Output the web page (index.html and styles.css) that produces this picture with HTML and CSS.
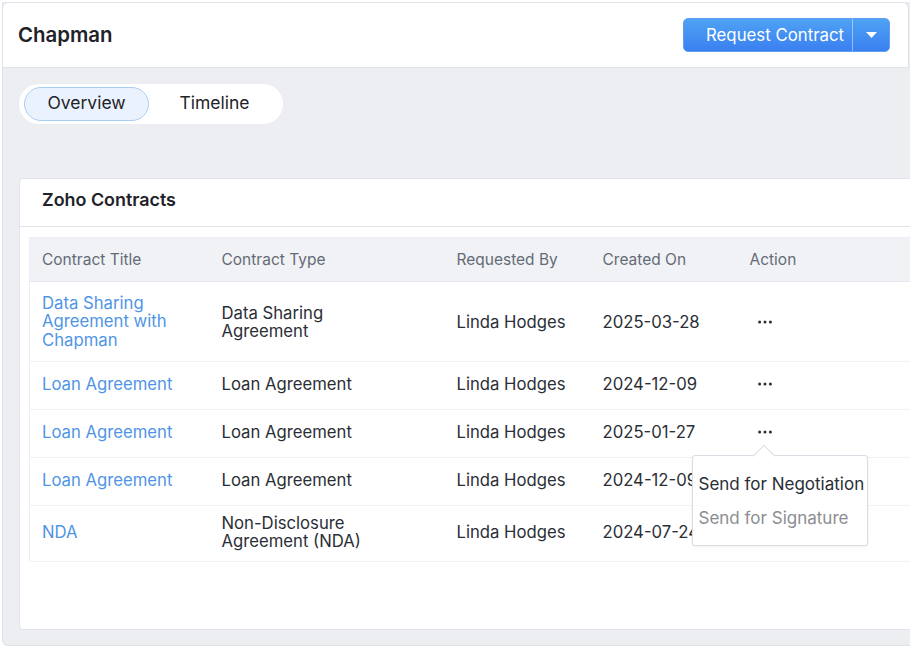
FILE: index.html
```html
<!DOCTYPE html>
<html lang="en">
<head>
<meta charset="utf-8">
<title>Chapman</title>
<link rel="stylesheet" href="styles.css">
</head>
<body>
<div class="frame">
  <header class="topbar">
    <h1 class="title">Chapman</h1>
    <div class="split-btn">
      <span class="split-main">Request Contract</span>
      <span class="split-caret"><svg width="11" height="6" viewBox="0 0 11 6"><path d="M0 0h11L5.5 6z" fill="#fff"/></svg></span>
    </div>
  </header>
  <main class="content">
    <nav class="tabs">
      <span class="tab tab-active">Overview</span>
      <span class="tab">Timeline</span>
    </nav>
    <section class="card">
      <div class="card-head">Zoho Contracts</div>
      <table class="grid">
        <thead>
          <tr>
            <th class="c1">Contract Title</th>
            <th class="c2">Contract Type</th>
            <th class="c3">Requested By</th>
            <th class="c4">Created On</th>
            <th class="c5">Action</th>
          </tr>
        </thead>
        <tbody>
          <tr class="row-tall">
            <td><a class="link link-wrap">Data Sharing Agreement with Chapman</a></td>
            <td><div class="type">Data Sharing Agreement</div></td>
            <td>Linda Hodges</td>
            <td>2025-03-28</td>
            <td><span class="dots"><svg width="14" height="4" viewBox="0 0 14 4"><circle cx="1.6" cy="2" r="1.5"/><circle cx="7" cy="2" r="1.5"/><circle cx="12.4" cy="2" r="1.5"/></svg></span></td>
          </tr>
          <tr>
            <td><a class="link">Loan Agreement</a></td>
            <td><div class="type">Loan Agreement</div></td>
            <td>Linda Hodges</td>
            <td>2024-12-09</td>
            <td><span class="dots"><svg width="14" height="4" viewBox="0 0 14 4"><circle cx="1.6" cy="2" r="1.5"/><circle cx="7" cy="2" r="1.5"/><circle cx="12.4" cy="2" r="1.5"/></svg></span></td>
          </tr>
          <tr>
            <td><a class="link">Loan Agreement</a></td>
            <td><div class="type">Loan Agreement</div></td>
            <td>Linda Hodges</td>
            <td>2025-01-27</td>
            <td class="action-cell">
              <span class="dots"><svg width="14" height="4" viewBox="0 0 14 4"><circle cx="1.6" cy="2" r="1.5"/><circle cx="7" cy="2" r="1.5"/><circle cx="12.4" cy="2" r="1.5"/></svg></span>
              <div class="menu">
                <div class="menu-item">Send for Negotiation</div>
                <div class="menu-item menu-muted">Send for Signature</div>
              </div>
            </td>
          </tr>
          <tr>
            <td><a class="link">Loan Agreement</a></td>
            <td><div class="type">Loan Agreement</div></td>
            <td>Linda Hodges</td>
            <td>2024-12-09</td>
            <td></td>
          </tr>
          <tr class="row-mid">
            <td><a class="link">NDA</a></td>
            <td><div class="type">Non-Disclosure Agreement (NDA)</div></td>
            <td>Linda Hodges</td>
            <td>2024-07-24</td>
            <td></td>
          </tr>
        </tbody>
      </table>
    </section>
  </main>
</div>
</body>
</html>
```

FILE: styles.css
```css
* { box-sizing: border-box; }
html, body { margin: 0; padding: 0; }
body {
  width: 910px;
  height: 647px;
  overflow: hidden;
  background: #ffffff;
  font-family: Inter, "Noto Sans", "Liberation Sans", sans-serif;
  color: #2a2e36;
}
.frame {
  margin: 2px 0 0 2px;
  width: 920px;
  height: 644px;
  border-left: 1px solid #dde1e8;
  border-bottom: 1px solid #dde1e8;
  border-bottom-left-radius: 6px;
  display: flex;
  flex-direction: column;
  background: #edeef2;
}
.topbar {
  width: 907px;
  height: 66px;
  flex: none;
  background: #fff;
  border-top: 1px solid #dde1e8;
  border-right: 1px solid #dde1e8;
  border-bottom: 1px solid #e2e5eb;
  border-top-left-radius: 6px;
  border-top-right-radius: 6px;
  margin-left: -1px;
  border-left: 1px solid #dde1e8;
  display: flex;
  align-items: center;
  justify-content: space-between;
  padding: 0 18px 0 15px;
}
.title {
  margin: 0 0 2px 0;
  font-size: 20.4px;
  font-weight: 600;
  color: #1f2229;
}
.split-btn {
  display: flex;
  height: 34px;
  width: 207px;
  border-radius: 5px;
  background: linear-gradient(#4fa2f4, #3a7ff0);
  color: #fff;
  border: 1px solid #5f9fee;
  overflow: hidden;
}
.split-main {
  flex: 1;
  display: flex;
  align-items: center;
  justify-content: center;
  padding: 0 0 1px 14px;
  font-size: 16.8px;
  border-right: 1px solid rgba(255, 255, 255, 0.45);
}
.split-caret {
  width: 36px;
  display: flex;
  align-items: center;
  justify-content: center;
}
.content {
  flex: 1;
  padding: 16px 0 14px 16px;
  display: flex;
  flex-direction: column;
  align-items: flex-start;
}
.tabs {
  display: flex;
  gap: 3px;
  background: #fff;
  border-radius: 20px;
  padding: 3px 6px 3px 5px;
  height: 40px;
}
.tab {
  width: 125px;
  height: 34px;
  display: flex;
  align-items: center;
  justify-content: center;
  padding-bottom: 3px;
  font-size: 17.5px;
  color: #1f2229;
  border-radius: 17px;
  border: 1px solid transparent;
}
.tab-active {
  background: #eaf3fd;
  border-color: #a9cdf2;
}
.card {
  margin-top: 54px;
  width: 920px;
  height: 452px;
  background: #fff;
  border: 1px solid #e1e4ea;
  border-radius: 4px;
}
.card-head {
  height: 48px;
  border-bottom: 1px solid #dfe3e9;
  padding: 0 0 7px 22px;
  display: flex;
  align-items: center;
  font-size: 17.9px;
  font-weight: 600;
  color: #1f2229;
}
.grid {
  margin: 10px 0 0 9px;
  width: 900px;
  border-collapse: collapse;
  border: 1px solid #eceef2;
  font-size: 16.7px;
}
.grid th {
  height: 44px;
  background: #f1f2f5;
  color: #646b77;
  font-weight: 400;
  font-size: 15.5px;
  text-align: left;
  padding: 0 12px 1px;
  border-bottom: 1px solid #e3e6eb;
}
.c1 { width: 180px; }
.c2 { width: 235px; }
.c3 { width: 146px; }
.c4 { width: 147px; }
.grid td {
  height: 48px;
  padding: 0 12px 3px;
  vertical-align: middle;
  border-bottom: 1px solid #eff1f4;
  color: #2a2e36;
  line-height: 18px;
}
.grid tr.row-tall td { height: 80px; padding-bottom: 0; }
.grid tr.row-mid td { height: 56px; }
.link {
  color: #4f95e5;
  text-decoration: none;
  display: block;
}
.link-wrap { max-width: 140px; line-height: 18.5px; }
.type { max-width: 150px; }
.dots {
  display: inline-flex;
  margin-left: 8px;
  fill: #2a2e36;
  position: relative;
  top: -4px;
}
.action-cell { position: relative; }
.menu {
  position: absolute;
  left: -46px;
  top: 45px;
  width: 176px;
  height: 91px;
  background: #fff;
  border: 1px solid #d9dce2;
  border-radius: 3px;
  box-shadow: 0 1px 3px rgba(0, 0, 0, 0.06);
  padding: 17px 0 0 6px;
  z-index: 2;
}
.menu::before {
  content: "";
  position: absolute;
  left: 63px;
  top: -8px;
  width: 15px;
  height: 15px;
  background: #fff;
  border-left: 1px solid #d9dce2;
  border-top: 1px solid #d9dce2;
  transform: rotate(45deg);
}
.menu-item {
  position: relative;
  font-size: 17px;
  line-height: 22px;
  height: 34px;
  color: #2a2e36;
  white-space: nowrap;
}
.menu-muted { color: #8b8d92; }
```
